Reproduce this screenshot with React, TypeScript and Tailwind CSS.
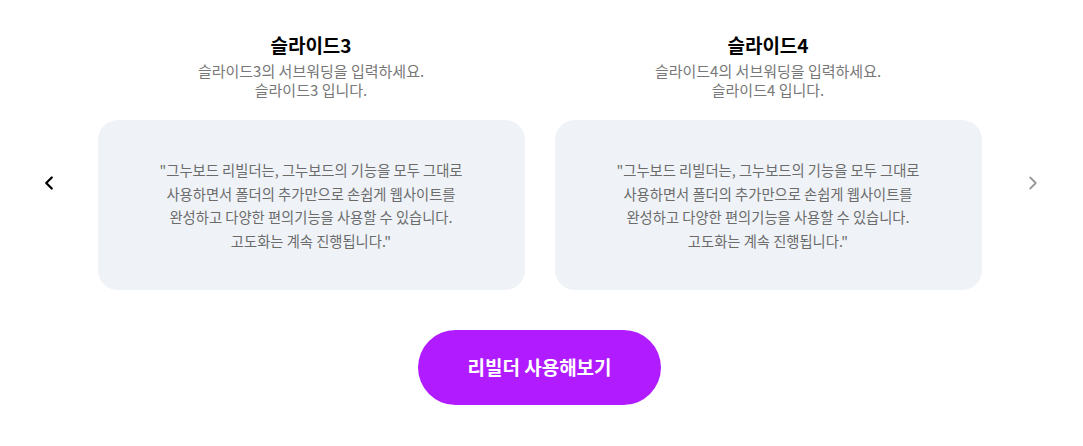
import React from 'react';
import { ChevronLeft, ChevronRight } from 'lucide-react';

interface SlideProps {
  title: string;
  sub: string;
  line: string;
}

const quote = [
  '"그누보드 리빌더는, 그누보드의 기능을 모두 그대로',
  '사용하면서 폴더의 추가만으로 손쉽게 웹사이트를',
  '완성하고 다양한 편의기능을 사용할 수 있습니다.',
  '고도화는 계속 진행됩니다."',
];

const Slide: React.FC<SlideProps> = ({ title, sub, line }) => {
  return (
    <div className="flex flex-col items-center w-[427px]">
      <h3 className="text-[19px] leading-[24px] font-bold text-black">{title}</h3>
      <p className="mt-[4px] text-[15px] leading-[19px] text-[#777] text-center">
        {sub}
        <br />
        {line}
      </p>
      <div className="mt-[21px] w-full h-[170px] rounded-[20px] bg-[#eff3f8] flex items-center justify-center">
        <p className="text-[14.3px] leading-[23.5px] text-[#6b6b6b] text-center">
          {quote.map((q, i) => (
            <React.Fragment key={i}>
              {q}
              {i < quote.length - 1 && <br />}
            </React.Fragment>
          ))}
        </p>
      </div>
    </div>
  );
};

export default function App() {
  return (
    <div
      className="w-full h-[446px] bg-white flex flex-col items-center pt-[33px]"
      style={{ fontFamily: '"Noto Sans CJK KR", "Noto Sans", sans-serif' }}
    >
      <div className="flex items-start">
        <div className="w-[96px] h-[290px] flex items-center pl-[36px] pt-[10px]">
          <ChevronLeft className="w-[22px] h-[22px] text-black" strokeWidth={2.5} />
        </div>
        <div className="flex gap-[30px]">
          <Slide title="슬라이드3" sub="슬라이드3의 서브워딩을 입력하세요." line="슬라이드3 입니다." />
          <Slide title="슬라이드4" sub="슬라이드4의 서브워딩을 입력하세요." line="슬라이드4 입니다." />
        </div>
        <div className="w-[100px] h-[290px] flex items-center pl-[40px] pt-[10px]">
          <ChevronRight className="w-[22px] h-[22px] text-[#999]" strokeWidth={2} />
        </div>
      </div>
      <button className="mt-[7px] mr-[4px] w-[243px] h-[75px] rounded-full bg-[#b01cff] text-white text-[19px] font-bold">
        리빌더 사용해보기
      </button>
    </div>
  );
}
